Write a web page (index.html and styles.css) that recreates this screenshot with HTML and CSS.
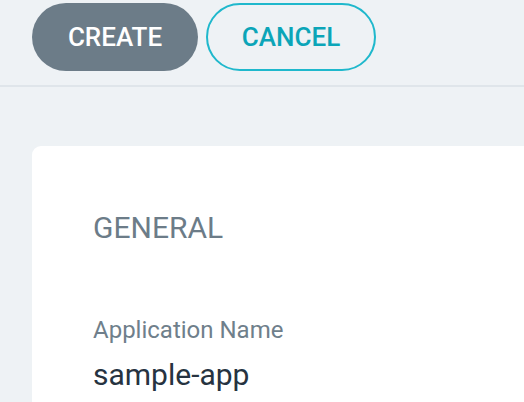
FILE: index.html
```html
<!DOCTYPE html>
<html lang="en">
<head>
    <meta charset="UTF-8">
    <meta name="viewport" content="width=device-width, initial-scale=1.0">
    <title>New Application</title>
    <link rel="stylesheet" href="styles.css">
</head>
<body>
    <div class="toolbar">
        <button class="btn btn-create">CREATE</button>
        <button class="btn btn-cancel">CANCEL</button>
    </div>
    <div class="content">
        <div class="card">
            <h2 class="section-title">GENERAL</h2>
            <div class="field">
                <label class="field-label">Application Name</label>
                <div class="field-value">sample-app</div>
            </div>
        </div>
    </div>
</body>
</html>
```
FILE: styles.css
```css
body {
    font-family: Roboto, "Liberation Sans", sans-serif;
    margin: 0;
    background: #eef2f5;
    overflow: hidden;
}
.toolbar {
    display: flex;
    gap: 8px;
    padding: 3px 32px 0;
    height: 87px;
    box-sizing: border-box;
    border-bottom: 2px solid #dfe5ea;
}
.btn {
    height: 68px;
    border-radius: 34px;
    font-family: Roboto, "Liberation Sans", sans-serif;
    font-size: 26px;
    font-weight: 500;
    cursor: pointer;
}
.btn-create {
    width: 166px;
    background: #6c7c88;
    color: #fff;
    border: none;
}
.btn-cancel {
    width: 170px;
    background: transparent;
    color: #0ba5b8;
    border: 2px solid #1fb8cc;
}
.content {
    padding: 59px 0 0 32px;
}
.card {
    background: #fff;
    border-radius: 9px 0 0 0;
    padding: 64px 60px 40px 61px;
    height: 400px;
}
.section-title {
    margin: 0 0 71px;
    font-size: 30px;
    font-weight: 400;
    color: #6c7c88;
}
.field-label {
    display: block;
    font-size: 24px;
    color: #6f7f8b;
    margin-bottom: 13px;
}
.field-value {
    font-size: 30px;
    color: #263341;
}
```
